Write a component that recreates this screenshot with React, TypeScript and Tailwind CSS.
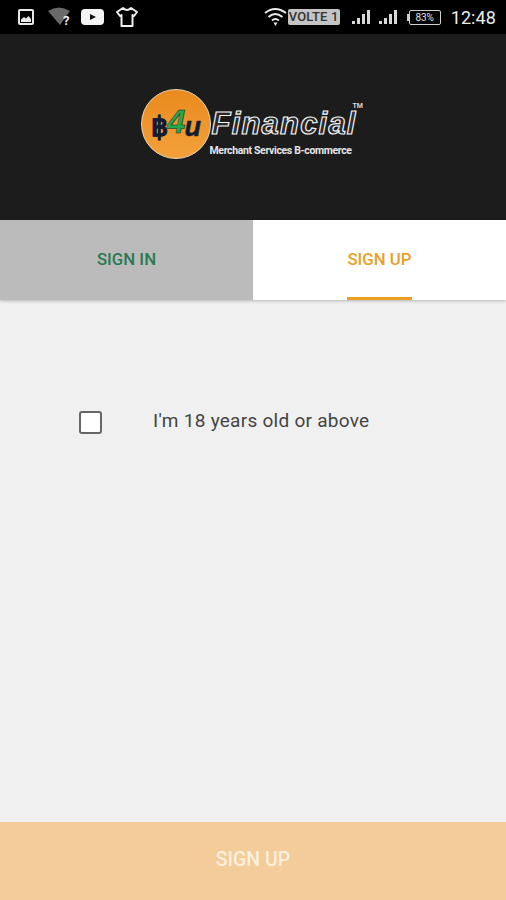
function StatusLeft() {
  return (
    <div className="flex items-center">
      <svg width="16" height="16" viewBox="0 0 16 16" className="ml-[18px]">
        <rect x="1" y="1" width="14" height="14" rx="1" fill="none" stroke="#e8e8e8" strokeWidth="2" />
        <path d="M3 13 L3 10.500 L6 8 L8 9.500 L10.500 7 L13 10 L13 13 Z" fill="#e8e8e8" />
      </svg>
      <svg width="24" height="20" viewBox="0 0 24 20" className="ml-[14px]">
        <path d="M0 4 Q11 -3 22 4 L12 18 Z" fill="#6a6a6a" />
        <text x="15" y="18" fontSize="13" fontWeight="700" fill="#f0f0f0" fontFamily="Roboto, sans-serif">?</text>
      </svg>
      <svg width="24" height="17" viewBox="0 0 24 17" className="ml-[9px]">
        <rect x="0" y="0" width="23" height="16" rx="4" fill="#f4f4f4" />
        <path d="M9 5 L15 8 L9 11 Z" fill="#111" />
      </svg>
      <svg width="24" height="22" viewBox="0 0 24 22" className="ml-[10px]">
        <path
          d="M8 2 Q12 6 16 2 L22 6 L19 10 L17.500 9 L17.500 20 L6.500 20 L6.500 9 L5 10 L2 6 Z"
          fill="none"
          stroke="#f0f0f0"
          strokeWidth="2"
          strokeLinejoin="round"
        />
      </svg>
    </div>
  );
}

function Bars() {
  return (
    <svg width="18" height="17" viewBox="0 0 18 17">
      <rect x="0" y="12" width="3" height="3" fill="#d8d8d8" />
      <rect x="5" y="9" width="3" height="6" fill="#d8d8d8" />
      <rect x="10" y="5" width="3" height="10" fill="#d8d8d8" />
      <rect x="15" y="1" width="3" height="14" fill="#d8d8d8" />
    </svg>
  );
}

function StatusRight() {
  return (
    <div className="flex items-center">
      <svg width="24" height="20" viewBox="0 0 24 20">
        <path d="M1 6 Q11 -2 22 6" fill="none" stroke="#e8e8e8" strokeWidth="2" />
        <path d="M4.500 10 Q11 4 18.500 10" fill="none" stroke="#e8e8e8" strokeWidth="2" />
        <path d="M8 13.500 Q11 10.500 15 13.500" fill="none" stroke="#e8e8e8" strokeWidth="2" />
        <path d="M9.500 15.500 L13.500 15.500 L11.500 19 Z" fill="#e8e8e8" />
      </svg>
      <div className="flex h-[16px] w-[52px] items-center justify-center rounded-[2px] bg-[#c4c4c4] text-[13px] font-medium tracking-[0.2px] text-[#333]">
        VOLTE 1
      </div>
      <div className="ml-[12px] flex">
        <Bars />
      </div>
      <div className="ml-[9px] flex">
        <Bars />
      </div>
      <div className="ml-[10px] flex items-center">
        <div className="h-[7px] w-[2px] bg-[#d0d0d0]" />
        <div className="flex h-[15px] w-[32px] items-center justify-center rounded-[2px] border border-[#d0d0d0] text-[10px] text-[#e0e0e0]">
          83%
        </div>
      </div>
      <span className="ml-[10px] mr-[10px] text-[18px] tracking-[0.1px] text-[#ececec]">12:48</span>
    </div>
  );
}

function Logo() {
  return (
    <div className="relative flex h-[72px] w-[225px] items-start">
      <div className="flex h-[70px] w-[70px] shrink-0 items-center justify-center rounded-full border border-[#e8d8b8] bg-gradient-to-b from-[#e98a1c] to-[#f3a13a]">
        <span className="font-['Liberation_Sans',sans-serif] text-[27px] font-black leading-none tracking-[-1px] text-[#141c33] [-webkit-text-stroke:0.5px_#141c33]">
          ฿<span className="relative top-[-3px] text-[33px] italic text-[#27a84a]">4</span>
          <span className="italic">u</span>
        </span>
      </div>
      <div className="ml-[1px] flex flex-col pt-[20px]">
        <span className="font-['Liberation_Sans',sans-serif] text-[31px] font-bold italic leading-[30px] tracking-[1.2px] text-[#2a2a2a] [-webkit-text-stroke:1.2px_#f4f4f4]">
          Financial
        </span>
        <span className="ml-[-2px] mt-[6px] whitespace-nowrap text-[10.500px] font-bold leading-[12px] tracking-[-0.35px] text-[#e6e6e6]">
          Merchant Services B-commerce
        </span>
      </div>
      <span className="absolute left-[212px] top-[14px] text-[7px] font-bold leading-[6px] text-[#ddd]">TM</span>
    </div>
  );
}

export default function App() {
  return (
    <div className="flex h-[900px] w-[506px] flex-col overflow-hidden bg-[#f0f0f0] font-['Roboto',sans-serif]">
      <div className="flex h-[34px] shrink-0 items-center justify-between bg-black">
        <StatusLeft />
        <StatusRight />
      </div>

      <div className="flex h-[186px] shrink-0 items-center justify-center bg-[#1c1c1c] pb-[4px]">
        <Logo />
      </div>

      <div className="flex h-[80px] shrink-0 shadow-[0_1px_3px_rgba(0,0,0,0.25)]">
        <div className="flex w-[253px] items-center justify-center bg-[#bbbbbb] pb-[1px] text-[16.800px] font-medium text-[#2a7a50]">
          SIGN IN
        </div>
        <div className="flex w-[253px] items-center justify-center bg-white">
          <div className="flex h-full flex-col items-center justify-center border-b-[3px] border-[#e8a020] pt-[3px] text-[16.800px] font-medium text-[#e8a028]">
            SIGN UP
          </div>
        </div>
      </div>

      <div className="flex flex-1 items-start pl-[79px] pt-[111px]">
        <div className="h-[23px] w-[23px] rounded-[3px] border-[2px] border-[#666] bg-white" />
        <span className="ml-[51px] text-[19px] leading-[20px] tracking-[0.27px] text-[#444]">I'm 18 years old or above</span>
      </div>

      <div className="flex h-[78px] shrink-0 items-center justify-center bg-[#f4cc99] pb-[3px] text-[19.500px] font-medium text-[#faf0dd]">
        SIGN UP
      </div>
    </div>
  );
}
